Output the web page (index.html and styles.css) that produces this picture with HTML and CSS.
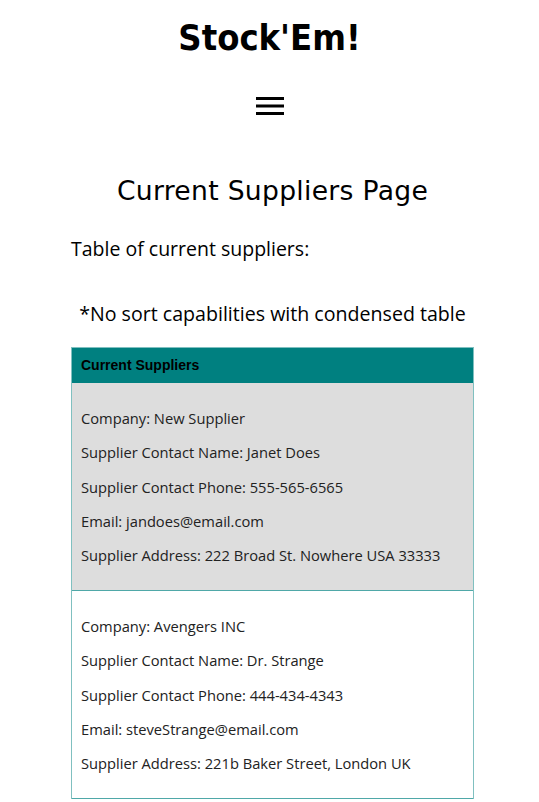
FILE: index.html
```html
<!DOCTYPE html>
<html>
<head>
<meta charset="utf-8">
<link rel="stylesheet" href="styles.css">
</head>
<body>
<header class="site-header">
  <h1 class="logo">Stock'Em!</h1>
  <button class="menu-btn" aria-label="menu">
    <svg width="28" height="20" viewBox="0 0 28 20"><rect x="0" y="1" width="28" height="3" fill="#000"/><rect x="0" y="8.5" width="28" height="3" fill="#000"/><rect x="0" y="16" width="28" height="3" fill="#000"/></svg>
  </button>
</header>
<main class="content">
  <h2 class="page-title">Current Suppliers Page</h2>
  <p class="intro">Table of current suppliers:</p>
  <p class="note">*No sort capabilities with condensed table</p>
  <div class="table">
    <div class="table-head">Current Suppliers</div>
    <div class="row row-alt">
      <div class="line">Company: New Supplier</div>
      <div class="line">Supplier Contact Name: Janet Does</div>
      <div class="line">Supplier Contact Phone: 555-565-6565</div>
      <div class="line">Email: jandoes@email.com</div>
      <div class="line">Supplier Address: 222 Broad St. Nowhere USA 33333</div>
    </div>
    <div class="row">
      <div class="line">Company: Avengers INC</div>
      <div class="line">Supplier Contact Name: Dr. Strange</div>
      <div class="line">Supplier Contact Phone: 444-434-4343</div>
      <div class="line">Email: steveStrange@email.com</div>
      <div class="line">Supplier Address: 221b Baker Street, London UK</div>
    </div>
  </div>
</main>
</body>
</html>
```
FILE: styles.css
```css
* { box-sizing: border-box; }
body {
  margin: 0;
  font-family: "Open Sans", sans-serif;
  color: #000;
  background: #fff;
}
.site-header {
  display: flex;
  flex-direction: column;
  align-items: center;
  padding-top: 14px;
}
.logo {
  margin: 0;
  font-family: "DejaVu Sans Condensed", "DejaVu Sans", sans-serif;
  font-stretch: condensed;
  font-weight: bold;
  font-size: 36px;
  line-height: 48px;
}
.menu-btn {
  margin-top: 34px;
  background: none;
  border: 0;
  padding: 0;
  width: 28px;
  height: 20px;
  display: block;
}
.menu-btn svg { display: block; }
.content {
  width: 403px;
  margin: 0 0 0 71px;
}
.page-title {
  margin: 57px 0 0;
  text-align: center;
  font-family: "DejaVu Sans", sans-serif;
  font-weight: normal;
  font-size: 26.6px;
  line-height: 36px;
  letter-spacing: 0.3px;
}
.intro {
  margin: 26px 0 0;
  font-size: 19.5px;
  line-height: 28px;
}
.note {
  margin: 37px 0 0;
  text-align: center;
  font-size: 19.6px;
  line-height: 28px;
}
.table {
  margin-top: 19px;
  border: 1px solid #80c0c0;
  border-bottom: 0;
}
.table-head {
  background: #008080;
  height: 35px;
  line-height: 35px;
  padding-left: 9px;
  font-family: "Liberation Sans", Arial, sans-serif;
  font-weight: bold;
  font-size: 14px;
  color: #000;
}
.row {
  padding: 18px 9px 17.5px;
  border-bottom: 1px solid #4fa8a8;
}
.row-alt { background: #dddddd; }
.line {
  height: 34.3px;
  line-height: 34.3px;
  font-size: 14.7px;
  color: #222;
}
```
